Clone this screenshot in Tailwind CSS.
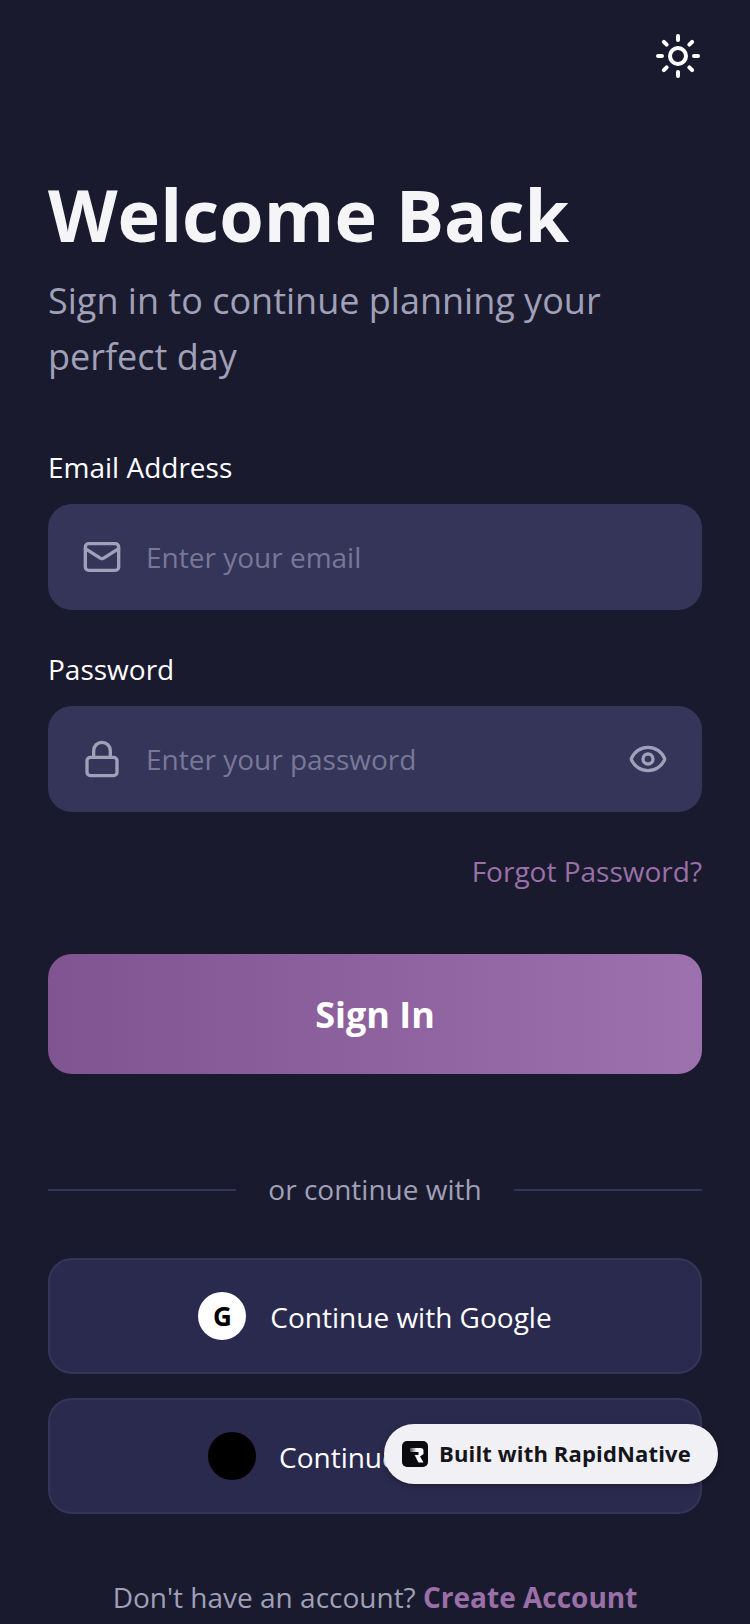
<!DOCTYPE html>
<html>
<head>
<meta charset="utf-8">
<script src="https://cdn.jsdelivr.net/npm/@tailwindcss/browser@4"></script>
</head>
<body class="m-0">
<div class="relative w-[750px] h-[1624px] overflow-hidden bg-[#1a1a2e] font-['Open_Sans',sans-serif] text-white">
  <div class="flex justify-end pt-[32px] pr-[48px]">
    <svg class="w-[48px] h-[48px]" viewBox="0 0 24 24" fill="none" stroke="#fff" stroke-width="2" stroke-linecap="round"><circle cx="12" cy="12" r="4"/><path d="M12 2v2M12 20v2M4.930 4.930l1.410 1.410M17.660 17.660l1.410 1.410M2 12h2M20 12h2M6.340 17.660l-1.410 1.410M19.070 4.930l-1.410 1.410"/></svg>
  </div>
  <div class="px-[48px]">
    <h1 class="mt-[90px] text-[72px] leading-[88px] font-bold text-[#f5f5f7]">Welcome Back</h1>
    <p class="mt-[15px] text-[36px] leading-[56px] text-[#a0a0b8]">Sign in to continue planning your perfect day</p>

    <label class="block mt-[62px] text-[28px] leading-[40px] text-white">Email Address</label>
    <div class="mt-[17px] h-[106px] rounded-[24px] bg-[#35355a] flex items-center pl-[34px] pr-[34px]">
      <svg class="w-[40px] h-[40px] shrink-0" viewBox="0 0 24 24" fill="none" stroke="#a0a0b8" stroke-width="2" stroke-linecap="round" stroke-linejoin="round"><rect x="2" y="4" width="20" height="16" rx="2"/><path d="m22 7-8.970 5.700a1.940 1.940 0 0 1-2.060 0L2 7"/></svg>
      <span class="ml-[24px] text-[28px] text-[#787896]">Enter your email</span>
    </div>

    <label class="block mt-[39px] text-[28px] leading-[40px] text-white">Password</label>
    <div class="mt-[17px] h-[106px] rounded-[24px] bg-[#35355a] flex items-center pl-[34px] pr-[34px]">
      <svg class="w-[40px] h-[40px] shrink-0" viewBox="0 0 24 24" fill="none" stroke="#a0a0b8" stroke-width="2" stroke-linecap="round" stroke-linejoin="round"><rect x="3" y="11" width="18" height="11" rx="2" ry="2"/><path d="M7 11V7a5 5 0 0 1 10 0v4"/></svg>
      <span class="ml-[24px] text-[28px] text-[#787896]">Enter your password</span>
      <svg class="ml-auto w-[40px] h-[40px] shrink-0" viewBox="0 0 24 24" fill="none" stroke="#a0a0b8" stroke-width="2" stroke-linecap="round" stroke-linejoin="round"><path d="M2.060 12.350a1 1 0 0 1 0-.700 10.750 10.750 0 0 1 19.880 0 1 1 0 0 1 0 .700 10.750 10.750 0 0 1-19.880 0"/><circle cx="12" cy="12" r="3"/></svg>
    </div>

    <div class="mt-[39px] text-right text-[28px] leading-[40px] text-[#9b6fa8]">Forgot Password?</div>

    <div class="mt-[63px] h-[120px] pt-[2px] rounded-[24px] bg-gradient-to-r from-[#7f5490] to-[#9d70ae] flex items-center justify-center text-[36px] font-bold">Sign In</div>

    <div class="mt-[91px] flex items-center">
      <div class="flex-1 h-[2px] bg-[#35355a]"></div>
      <span class="px-[32px] pb-[2px] text-[28px] leading-[48px] text-[#a0a0b8]">or continue with</span>
      <div class="flex-1 h-[2px] bg-[#35355a]"></div>
    </div>

    <div class="mt-[43px] h-[116px] rounded-[24px] bg-[#2a2a4e] border-2 border-[#35355a] flex items-center justify-center gap-[24px]">
      <div class="w-[48px] h-[48px] rounded-full bg-white text-black flex items-center justify-center text-[26px] font-bold">G</div>
      <span class="pt-[2px] text-[28px]">Continue with Google</span>
    </div>
    <div class="mt-[24px] h-[116px] rounded-[24px] bg-[#2a2a4e] border-2 border-[#35355a] flex items-center justify-center gap-[24px]">
      <div class="w-[48px] h-[48px] translate-x-[1px] rounded-full bg-black"></div>
      <span class="pt-[2px] text-[28px]">Continue with Apple</span>
    </div>

    <p class="mt-[63px] text-center text-[28px] leading-[40px] text-[#a0a0b8]">Don't have an account? <span class="font-bold text-[#9b6fa8]">Create Account</span></p>
  </div>

  <div class="absolute left-[384px] top-[1424px] w-[334px] h-[60px] rounded-full bg-[#f0f0f5] shadow-[0_2px_6px_rgba(0,0,0,0.3)] flex items-center pl-[18px] gap-[11px]">
    <svg class="w-[26px] h-[26px] shrink-0" viewBox="0 0 26 26"><defs><linearGradient id="r" x1="0" y1="0" x2="1" y2="0"><stop offset="0" stop-color="#444"/><stop offset="0.5" stop-color="#fff"/></linearGradient></defs><rect width="26" height="26" rx="5" fill="#0b0b0f"/><path d="M8 7h10.500a3 3 0 0 1 3 3v3l-3.500 2.500 3.500 6h-5l-4-7.500h4v-3h-8.500z" fill="url(#r)"/></svg>
    <span class="pb-[2px] text-[22px] font-bold text-[#15151c] tracking-[0.15px]">Built with RapidNative</span>
  </div>
</div>
</body>
</html>
